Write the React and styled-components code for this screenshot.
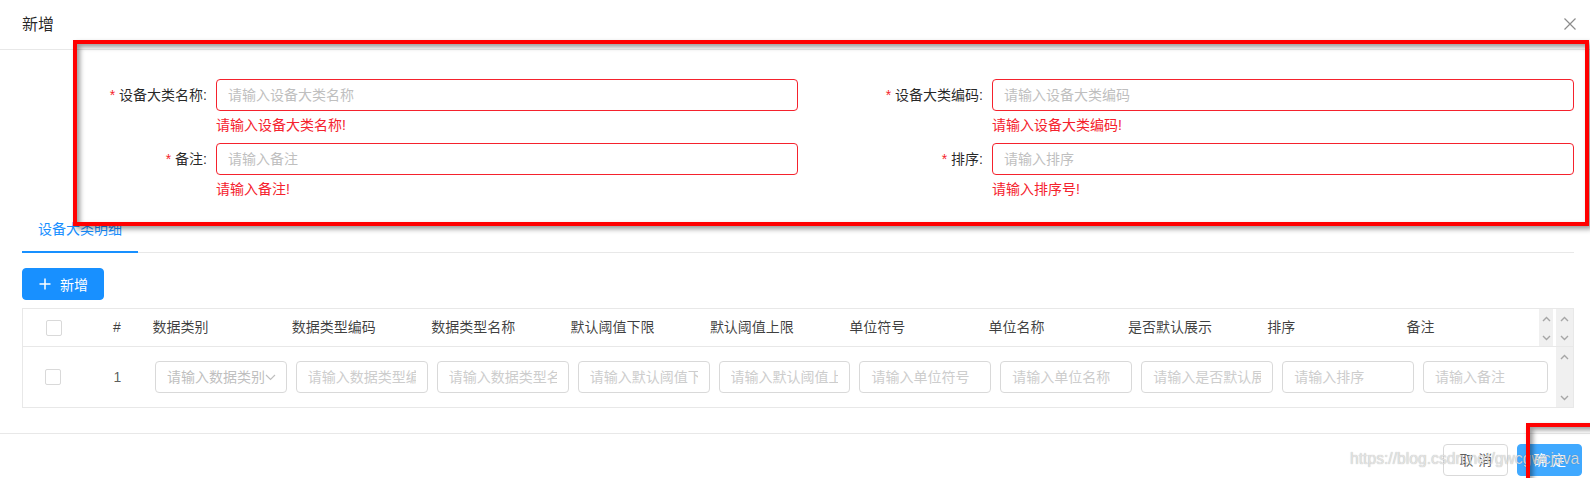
import React from 'react';
import styled, { createGlobalStyle } from 'styled-components';

const GlobalStyle = createGlobalStyle`
  html, body {
    margin: 0;
    padding: 0;
    width: 1590px;
    height: 478px;
    overflow: hidden;
    background: #fff;
  }
  body {
    font-family: "Liberation Sans", "Noto Sans CJK SC", sans-serif;
    font-size: 14px;
    color: rgba(0, 0, 0, 0.65);
  }
  * { box-sizing: border-box; }
`;

const TABLE_COLS = '62fr 66fr repeat(9, 141fr) 137fr';

const Modal = styled.div`
  position: relative;
  width: 1590px;
  height: 478px;
  overflow: hidden;
  background: #fff;
`;

const Header = styled.div`
  height: 50px;
  padding: 0 14px 0 22px;
  display: flex;
  align-items: center;
  justify-content: space-between;
  border-bottom: 1px solid #e8e8e8;
`;

const Title = styled.div`
  font-size: 16px;
  line-height: 22px;
  color: rgba(0, 0, 0, 0.85);
`;

const CloseBtn = styled.button`
  border: none;
  background: none;
  padding: 0;
  width: 12px;
  height: 12px;
  display: flex;
  margin-top: -1px;
`;

const Body = styled.div`
  padding: 25px 16px 25px 22px;
`;

const Form = styled.form`
  display: grid;
  grid-template-columns: 1fr 1fr;
`;

const FormItem = styled.div`
  display: grid;
  grid-template-columns: 25% 75%;
  margin-bottom: 3px;
`;

const Label = styled.label`
  height: 40px;
  line-height: 40px;
  text-align: right;
  padding-right: 9px;
  color: rgba(0, 0, 0, 0.85);
  white-space: nowrap;

  &::before {
    content: '*';
    color: #f5222d;
    margin-right: 4px;
    font-size: 14px;
  }
`;

const Control = styled.div`
  padding-top: 4px;
`;

const FieldInput = styled.input`
  display: block;
  width: 100%;
  height: 32px;
  padding: 4px 11px;
  font: inherit;
  font-size: 14px;
  color: rgba(0, 0, 0, 0.65);
  border: 1px solid ${(p) => (p.$invalid ? '#f5222d' : '#d9d9d9')};
  border-radius: 4px;
  outline: none;
  background: #fff;

  &::placeholder {
    color: ${(p) => (p.$invalid ? '#bfbfbf' : '#cdcdcd')};
  }
`;

const Explain = styled.div`
  margin-top: 4px;
  height: 21px;
  line-height: 21px;
  color: #f5222d;
`;

const TabBar = styled.div`
  margin-top: 4px;
  height: 46px;
  display: flex;
  border-bottom: 1px solid #e8e8e8;
`;

const Tab = styled.div`
  height: 46px;
  margin-bottom: -1px;
  padding: 0 16px;
  line-height: 44px;
  color: ${(p) => (p.$active ? '#1890ff' : 'rgba(0,0,0,0.65)')};
  border-bottom: 2px solid ${(p) => (p.$active ? '#1890ff' : 'transparent')};
`;

const PrimaryButton = styled.button`
  margin-top: 15px;
  height: 32px;
  padding: 0 15px;
  display: inline-flex;
  align-items: center;
  gap: 8px;
  font: inherit;
  font-size: 14px;
  color: #fff;
  background: #1890ff;
  border: 1px solid #1890ff;
  border-radius: 4px;
`;

const Table = styled.div`
  margin-top: 8px;
  border: 1px solid #e8e8e8;
`;

const HeadRow = styled.div`
  display: flex;
  height: 38px;
  border-bottom: 1px solid #e8e8e8;
`;

const BodyRow = styled.div`
  display: flex;
  height: 60px;
`;

const Grid = styled.div`
  flex: 1;
  display: grid;
  grid-template-columns: ${TABLE_COLS};
  align-items: center;
`;

const HeadCell = styled.div`
  padding: 0 3px;
  line-height: 21px;
  color: rgba(0, 0, 0, 0.75);
  white-space: nowrap;
  display: flex;
  justify-content: ${(p) => (p.$center ? 'center' : 'flex-start')};
`;

const BodyCell = styled.div`
  padding: 0 5px 0 4px;
  display: flex;
  justify-content: ${(p) => (p.$center ? 'center' : 'flex-start')};
  color: rgba(0, 0, 0, 0.65);

  &:last-child {
    padding-right: 8px;
  }
`;

const Checkbox = styled.span`
  display: block;
  width: 16px;
  height: 16px;
  border: 1px solid #d9d9d9;
  border-radius: 2px;
  background: #fff;
`;

const SelectBox = styled.div`
  width: 100%;
  height: 32px;
  padding: 0 8px 0 11px;
  display: flex;
  align-items: center;
  border: 1px solid #d9d9d9;
  border-radius: 4px;
  color: #bfbfbf;
  white-space: nowrap;
  overflow: hidden;
`;

const SelectText = styled.span`
  overflow: hidden;
  line-height: 30px;
`;

const ScrollBar = styled.div`
  width: ${(p) => p.$width || 17}px;
  margin-left: ${(p) => p.$gap || 0}px;
  background: #f0f0f0;
  display: flex;
  flex-direction: column;
  align-items: center;
  justify-content: space-between;
  padding: ${(p) => (p.$tall ? '7px 0 6px' : '7px 0 5px')};
`;

const Footer = styled.div`
  display: flex;
  justify-content: flex-end;
  gap: 9px;
  padding: 10px 8px 10px 16px;
  border-top: 1px solid #e8e8e8;
`;

const FooterButton = styled.button`
  height: 32px;
  padding: 0 15px;
  white-space: nowrap;
  flex-shrink: 0;
  font: inherit;
  font-size: 14px;
  line-height: 30px;
  border-radius: 4px;
  border: 1px solid ${(p) => (p.$primary ? '#40a9ff' : '#d9d9d9')};
  background: ${(p) => (p.$primary ? '#40a9ff' : '#fff')};
  color: ${(p) => (p.$primary ? '#fff' : 'rgba(0,0,0,0.65)')};

  span {
    display: inline-block;
    letter-spacing: 0.34em;
    margin-right: -0.34em;
  }
`;

const Watermark = styled.div`
  position: absolute;
  left: 1350px;
  top: 450px;
  font-family: "Liberation Sans", Arial, sans-serif;
  font-size: 15.7px;
  line-height: 18px;
  color: rgba(236, 236, 236, 0.85);
  text-shadow: 0 0 1px rgba(0, 0, 0, 0.35);
  white-space: nowrap;
  pointer-events: none;
`;

const Annotation = styled.div`
  position: absolute;
  left: ${(p) => p.$left}px;
  top: ${(p) => p.$top}px;
  width: ${(p) => p.$width}px;
  height: ${(p) => p.$height}px;
  border: 4px solid #ff0000;
  box-shadow: 3px 3px 5px rgba(0, 0, 0, 0.4), inset 3px 3px 5px rgba(0, 0, 0, 0.4);
  pointer-events: none;
`;

const Chevron = ({ up, color = '#a6a6a6' }) => (
  <svg width="9" height="6" viewBox="0 0 9 6">
    <path
      d={up ? 'M1 5 L4.5 1.5 L8 5' : 'M1 1 L4.5 4.5 L8 1'}
      fill="none"
      stroke={color}
      strokeWidth="1.4"
    />
  </svg>
);

const formFields = [
  { label: '设备大类名称', placeholder: '请输入设备大类名称', error: '请输入设备大类名称!' },
  { label: '设备大类编码', placeholder: '请输入设备大类编码', error: '请输入设备大类编码!' },
  { label: '备注', placeholder: '请输入备注', error: '请输入备注!' },
  { label: '排序', placeholder: '请输入排序', error: '请输入排序号!' },
];

const columns = [
  { title: '数据类别', placeholder: '请输入数据类别', select: true },
  { title: '数据类型编码', placeholder: '请输入数据类型编码' },
  { title: '数据类型名称', placeholder: '请输入数据类型名称' },
  { title: '默认阈值下限', placeholder: '请输入默认阈值下限' },
  { title: '默认阈值上限', placeholder: '请输入默认阈值上限' },
  { title: '单位符号', placeholder: '请输入单位符号' },
  { title: '单位名称', placeholder: '请输入单位名称' },
  { title: '是否默认展示', placeholder: '请输入是否默认展示' },
  { title: '排序', placeholder: '请输入排序' },
  { title: '备注', placeholder: '请输入备注' },
];

const App = () => {
  return (
    <Modal>
      <GlobalStyle />
      <Header>
        <Title>新增</Title>
        <CloseBtn aria-label="close">
          <svg width="12" height="12" viewBox="0 0 12 12">
            <path d="M0.5 0.5 L11.5 11.5 M11.5 0.5 L0.5 11.5" stroke="#8c8c8c" strokeWidth="1.2" />
          </svg>
        </CloseBtn>
      </Header>

      <Body>
        <Form>
          {formFields.map((f) => (
            <FormItem key={f.label}>
              <Label>{f.label}:</Label>
              <Control>
                <FieldInput $invalid placeholder={f.placeholder} />
                <Explain>{f.error}</Explain>
              </Control>
            </FormItem>
          ))}
        </Form>

        <TabBar>
          <Tab $active>设备大类明细</Tab>
        </TabBar>

        <PrimaryButton type="button">
          <svg width="14" height="14" viewBox="0 0 14 14">
            <path d="M7 1.5 V12.5 M1.5 7 H12.5" stroke="#fff" strokeWidth="1.5" />
          </svg>
          新增
        </PrimaryButton>

        <Table>
          <HeadRow>
            <Grid>
              <HeadCell $center><Checkbox /></HeadCell>
              <HeadCell $center>#</HeadCell>
              {columns.map((c) => (
                <HeadCell key={c.title}>{c.title}</HeadCell>
              ))}
            </Grid>
            <ScrollBar $width={14}>
              <Chevron up />
              <Chevron />
            </ScrollBar>
            <ScrollBar $gap={3}>
              <Chevron up />
              <Chevron />
            </ScrollBar>
          </HeadRow>
          <BodyRow>
            <Grid>
              <BodyCell $center><Checkbox /></BodyCell>
              <BodyCell $center>1</BodyCell>
              {columns.map((c) =>
                c.select ? (
                  <BodyCell key={c.title}>
                    <SelectBox>
                      <SelectText>{c.placeholder}</SelectText>
                      <svg width="11" height="7" viewBox="0 0 11 7" style={{ flexShrink: 0 }}>
                        <path d="M1 1 L5.5 5.5 L10 1" fill="none" stroke="#bfbfbf" strokeWidth="1.2" />
                      </svg>
                    </SelectBox>
                  </BodyCell>
                ) : (
                  <BodyCell key={c.title}>
                    <FieldInput placeholder={c.placeholder} />
                  </BodyCell>
                )
              )}
            </Grid>
            <ScrollBar $tall>
              <Chevron up />
              <Chevron />
            </ScrollBar>
          </BodyRow>
        </Table>
      </Body>

      <Footer>
        <FooterButton type="button"><span>取消</span></FooterButton>
        <FooterButton type="button" $primary><span>确定</span></FooterButton>
      </Footer>

      <Watermark>https://blog.csdn.net/gwcgwcjava</Watermark>
      <Annotation $left={73} $top={40} $width={1516} $height={186} />
      <Annotation $left={1526} $top={423} $width={200} $height={200} />
    </Modal>
  );
};

export default App;
